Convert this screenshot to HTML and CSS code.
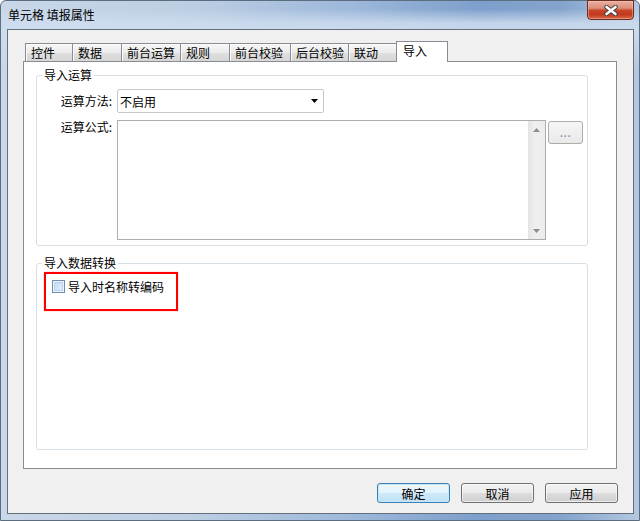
FILE: index.html
```html
<!DOCTYPE html>
<html lang="zh-CN">
<head>
<meta charset="utf-8">
<title>单元格 填报属性</title>
<link rel="stylesheet" href="styles.css">
</head>
<body>
<div class="window">
  <div class="titlebar">
    <span class="title">单元格 填报属性</span>
    <div class="close-btn">
      <svg width="14" height="11" viewBox="0 0 14 11"><path d="M2.5 2 L11.5 9 M11.5 2 L2.5 9" stroke="#3d3d3d" stroke-width="4.4" stroke-linecap="round"/><path d="M2.5 2 L11.5 9 M11.5 2 L2.5 9" stroke="#ffffff" stroke-width="2.6" stroke-linecap="round"/></svg>
    </div>
  </div>
  <div class="client">
    <div class="tabctl">
      <div class="tabstrip">
        <div class="tab">控件</div>
        <div class="tab">数据</div>
        <div class="tab">前台运算</div>
        <div class="tab">规则</div>
        <div class="tab">前台校验</div>
        <div class="tab">后台校验</div>
        <div class="tab">联动</div>
        <div class="tab active">导入</div>
      </div>
      <div class="panel">
        <fieldset class="group calc">
          <legend>导入运算</legend>
          <div class="row row-method">
            <label class="lbl">运算方法:</label>
            <div class="combo">
              <span>不启用</span>
              <svg width="7" height="4" viewBox="0 0 7 4"><path d="M0 0 H7 L3.5 4 Z" fill="#000"/></svg>
            </div>
          </div>
          <div class="row row-formula">
            <label class="lbl lbl-top">运算公式:</label>
            <div class="textbox">
              <div class="text"></div>
              <div class="vscroll">
                <div class="sbtn"><svg width="7" height="4" viewBox="0 0 7 4"><path d="M0 4 L3.5 0 L7 4 Z" fill="#8c8c8c"/></svg></div>
                <div class="track"></div>
                <div class="sbtn"><svg width="7" height="4" viewBox="0 0 7 4"><path d="M0 0 H7 L3.5 4 Z" fill="#8c8c8c"/></svg></div>
              </div>
            </div>
            <div class="dots-btn">...</div>
          </div>
        </fieldset>
        <fieldset class="group convert">
          <legend>导入数据转换</legend>
          <div class="convert-body">
            <div class="highlight">
              <div class="cb-row">
                <span class="checkbox"></span>
                <span class="cb-label">导入时名称转编码</span>
              </div>
            </div>
          </div>
        </fieldset>
      </div>
    </div>
    <div class="buttons">
      <button class="btn default">确定</button>
      <button class="btn">取消</button>
      <button class="btn">应用</button>
    </div>
  </div>
</div>
</body>
</html>
```
FILE: styles.css
```css
* { box-sizing: border-box; }
html, body { margin: 0; padding: 0; background: #ffffff; }
body {
  font-family: "Noto Sans CJK SC", "Liberation Sans", sans-serif;
  font-size: 12px;
  color: #000;
}

.window {
  width: 640px;
  height: 521px;
  display: flex;
  flex-direction: column;
  border: 1px solid #5d6d80;
  border-radius: 6px 6px 0 0;
  padding: 0 5px 6px 6px;
  background:
    linear-gradient(to bottom, rgba(214,227,242,0) 0px, rgba(214,227,242,0) 8px, rgba(206,221,239,0.85) 22px, rgba(206,221,239,0.9) 29px, rgba(206,221,239,0) 70px),
    linear-gradient(to right, #c9d7e8 0%, #bccee3 30%, #9db8da 55%, #7d9fcb 75%, #84a4cd 88%, #b4c8e0 100%);
}

.titlebar {
  flex: none;
  height: 28px;
  display: flex;
  justify-content: space-between;
  align-items: flex-start;
}
.title {
  margin-top: 6px;
  margin-left: 1px;
  line-height: 16px;
  color: #000;
}
.close-btn {
  width: 47px;
  height: 20px;
  margin-top: -1px;
  border: 1px solid #6b2c22;
  border-radius: 0 0 4px 4px;
  background: linear-gradient(to bottom, #eab0a2 0%, #dc8d78 40%, #c8452a 52%, #c23a1e 75%, #d8694a 100%);
  box-shadow: inset 0 0 0 1px rgba(255,200,180,0.45);
  display: flex;
  align-items: center;
  justify-content: center;
}

.client {
  flex: 1;
  display: flex;
  flex-direction: column;
  border: 1px solid #66707c;
  background: #f0f0f0;
  padding: 11px 15px 10px 15px;
}

.tabctl {
  margin-right: 1px;
  display: flex;
  flex-direction: column;
}
.tabstrip {
  height: 20px;
  display: flex;
  align-items: flex-end;
  padding-left: 2px;
}
.tab {
  height: 18px;
  border: 1px solid #898c95;
  border-bottom: none;
  margin-right: -1px;
  padding-left: 5px;
  line-height: 17px;
  white-space: nowrap;
  background: linear-gradient(to bottom, #f6f6f6 0%, #ececec 50%, #e0e0e0 51%, #d6d6d6 100%);
  box-shadow: inset 1px 1px 0 #fbfbfb;
}
.tab:nth-child(1) { width: 48px; }
.tab:nth-child(2) { width: 50px; }
.tab:nth-child(3) { width: 60px; }
.tab:nth-child(4) { width: 50px; }
.tab:nth-child(5) { width: 62px; }
.tab:nth-child(6) { width: 59px; }
.tab:nth-child(7) { width: 49px; }
.tab.active {
  width: 52px;
  height: 21px;
  margin-bottom: -1px;
  padding-left: 6px;
  background: #ffffff;
  box-shadow: none;
  position: relative;
  z-index: 1;
}

.panel {
  height: 408px;
  border: 1px solid #898c95;
  background: #ffffff;
  padding: 6px 28px 0 12px;
}

.group {
  margin: 0;
  padding: 0 0 5px 0;
  border: 1px solid #d5dfe5;
  border-radius: 3px;
  min-width: 0;
}
.group legend {
  margin-left: 5px;
  padding: 0 2px;
  height: 14px;
  line-height: 14px;
}

.row { display: flex; }
.row-method {
  margin-top: 7px;
  height: 24px;
  align-items: center;
}
.lbl {
  width: 80px;
  padding-right: 5px;
  text-align: right;
  line-height: 14px;
}
.lbl-top { line-height: 13px; }

.combo {
  width: 207px;
  height: 24px;
  border: 1px solid #c5c9ce;
  border-radius: 2px;
  background: #fff;
  display: flex;
  align-items: center;
  justify-content: space-between;
  padding: 0 5px 0 2px;
}
.combo svg { display: block; }

.row-formula {
  margin-top: 7px;
  align-items: flex-start;
}
.textbox {
  width: 429px;
  height: 120px;
  border: 1px solid #abadb3;
  background: #fff;
  display: flex;
}
.textbox .text { flex: 1; }
.vscroll {
  width: 17px;
  display: flex;
  flex-direction: column;
  background: linear-gradient(to right, #e4e4e4, #efefef 40%, #ececec);
}
.sbtn {
  height: 17px;
  display: flex;
  align-items: center;
  justify-content: center;
}
.sbtn svg { display: block; }
.track { flex: 1; }

.dots-btn {
  width: 35px;
  height: 23px;
  margin-left: 2px;
  margin-top: 1px;
  border: 1px solid #acacac;
  border-radius: 3px;
  background: linear-gradient(to bottom, #f6f6f6, #e9e9e9);
  color: #8d83ab;
  text-align: center;
  line-height: 20px;
  letter-spacing: 0.5px;
}

.convert { margin-top: 10px; }
.convert-body {
  height: 174px;
  padding: 2px 0 0 7px;
}
.highlight {
  width: 134px;
  height: 39px;
  border: 2px solid #ff0000;
  box-shadow: 0 0 1px rgba(255,60,60,0.7);
  padding: 6px 0 0 6px;
}
.cb-row {
  height: 13px;
  display: flex;
  align-items: center;
}
.checkbox {
  width: 13px;
  height: 13px;
  margin-right: 3px;
  border: 1px solid #6f8fae;
  background: linear-gradient(135deg, #c2dbf2 0%, #d7e8f8 60%, #e8f2fc 100%);
  box-shadow: inset 0 0 0 1px #eef5fc, inset 0 0 0 2px #b9d1ea;
  flex: none;
}
.cb-label {
  line-height: 14px;
  white-space: nowrap;
}

.buttons {
  margin-top: 14px;
  display: flex;
  justify-content: flex-end;
  gap: 11px;
}
.btn {
  width: 73px;
  height: 20px;
  padding: 0;
  border: 1px solid #707070;
  border-radius: 3px;
  font: inherit;
  font-size: 12px;
  line-height: 17px;
  color: #000;
  background: linear-gradient(to bottom, #f2f2f2 0%, #ebebeb 50%, #dddddd 51%, #cfcfcf 100%);
  box-shadow: inset 0 0 0 1px rgba(255,255,255,0.6);
}
.btn.default {
  border-color: #3c7fb1;
  background: linear-gradient(to bottom, #eef7fd 0%, #e2f2fc 50%, #cfe9f9 51%, #bfe0f5 100%);
  box-shadow: inset 0 0 0 1px #c6e6fa;
}
```
